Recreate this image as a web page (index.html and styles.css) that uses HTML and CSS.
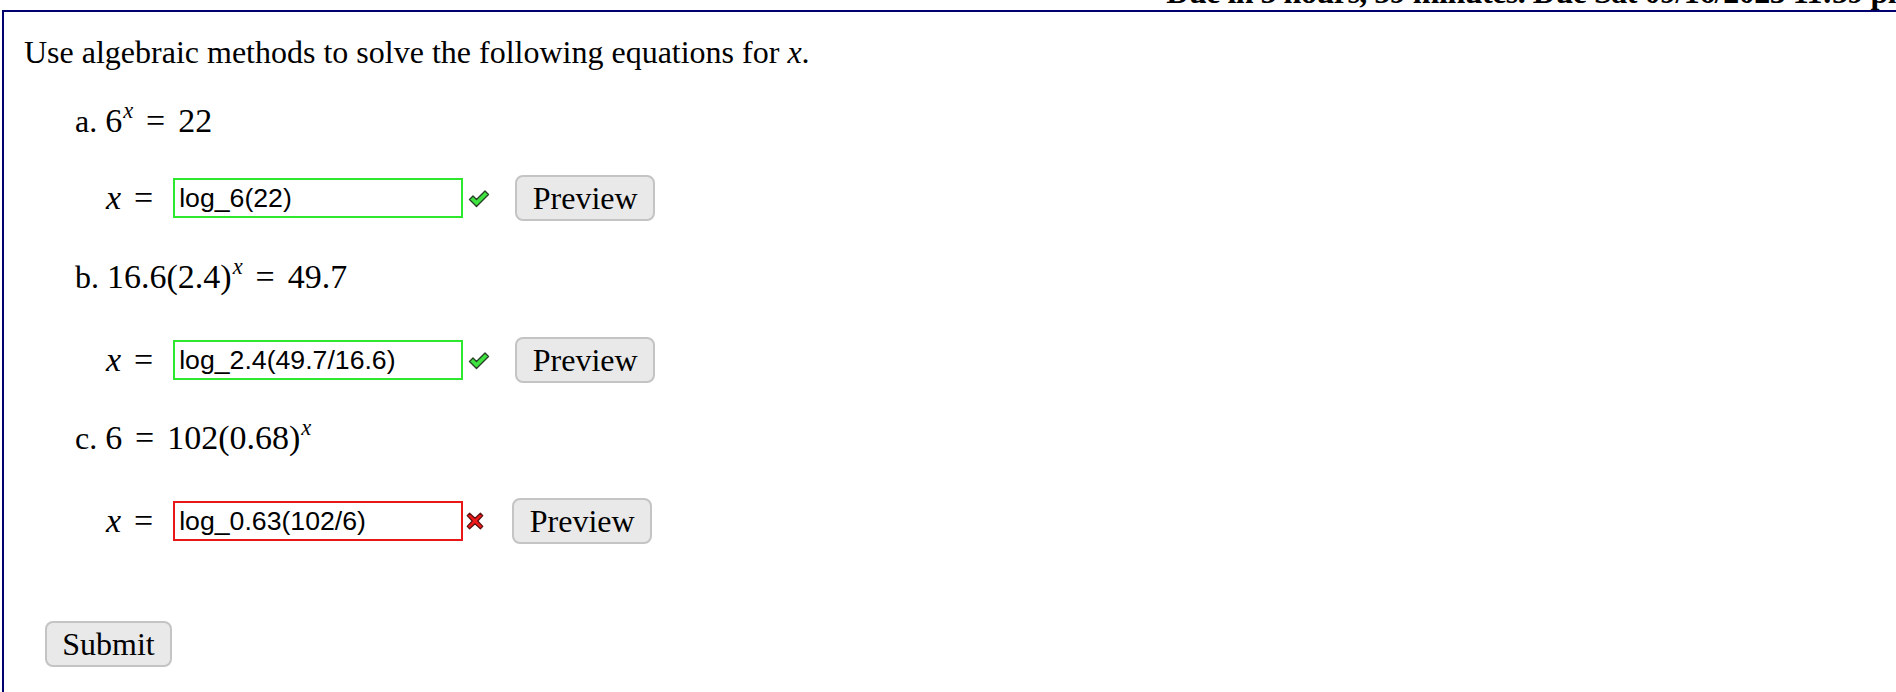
FILE: index.html
```html
<!DOCTYPE html>
<html lang="en">
<head>
<meta charset="utf-8">
<title>Problem</title>
<link rel="stylesheet" href="styles.css">
</head>
<body>
<div class="due">Due in 5 hours, 59 minutes. Due Sat 09/16/2023 11:59 pm</div>
<div class="frame">
  <p class="intro">Use algebraic methods to solve the following equations for <span class="mi">x</span>.</p>

  <div class="part">
    <div class="eq eq-a">a. <span class="math">6<span class="sup mi">x</span><span class="rel">=</span>22</span></div>
    <div class="answer answer-a">
      <span class="math"><span class="mi">x</span><span class="rel">=</span></span>
      <input class="ans correct" type="text" value="log_6(22)">
      <svg class="mark check" width="22" height="19" viewBox="0 0 22 19"><path d="M1.5 10.5 L5 7 L8.5 10.5 L17 2 L20.5 5.5 L8.5 17.5 Z" fill="#3fe33f" stroke="#264026" stroke-width="1.4" stroke-linejoin="round"/></svg>
      <button class="btn preview" type="button">Preview</button>
    </div>
  </div>

  <div class="part">
    <div class="eq eq-b">b. <span class="math">16.6(2.4)<span class="sup mi">x</span><span class="rel">=</span>49.7</span></div>
    <div class="answer answer-b">
      <span class="math"><span class="mi">x</span><span class="rel">=</span></span>
      <input class="ans correct" type="text" value="log_2.4(49.7/16.6)">
      <svg class="mark check" width="22" height="19" viewBox="0 0 22 19"><path d="M1.5 10.5 L5 7 L8.5 10.5 L17 2 L20.5 5.5 L8.5 17.5 Z" fill="#3fe33f" stroke="#264026" stroke-width="1.4" stroke-linejoin="round"/></svg>
      <button class="btn preview" type="button">Preview</button>
    </div>
  </div>

  <div class="part">
    <div class="eq eq-c">c. <span class="math">6<span class="rel">=</span>102(0.68)<span class="sup mi">x</span></span></div>
    <div class="answer answer-c">
      <span class="math"><span class="mi">x</span><span class="rel">=</span></span>
      <input class="ans incorrect" type="text" value="log_0.63(102/6)">
      <svg class="mark cross" width="18" height="18" viewBox="0 0 15 15"><path d="M3 1 L7.5 5.2 L12 1 L14 3 L9.8 7.5 L14 12 L12 14 L7.5 9.8 L3 14 L1 12 L5.2 7.5 L1 3 Z" fill="#f01818" stroke="#5a1010" stroke-width="1" stroke-linejoin="round"/></svg>
      <button class="btn preview" type="button">Preview</button>
    </div>
  </div>

  <button class="btn submit" type="button">Submit</button>
</div>
</body>
</html>
```

FILE: styles.css
```css
html, body {
  margin: 0;
  padding: 0;
  overflow: hidden;
  background: #ffffff;
}

body {
  font-family: "Liberation Serif", "Times New Roman", serif;
  font-size: 32px;
  color: #000;
}

.due {
  margin: -26px -18px 0 0;
  height: 36px;
  line-height: 36px;
  text-align: right;
  font-weight: bold;
  letter-spacing: -0.5px;
  white-space: nowrap;
}

.frame {
  margin: 0 -40px 0 2px;
  border: 2px solid #00006e;
  padding: 22px 20px 60px;
  min-height: 800px;
}

.intro {
  margin: 0;
  line-height: 36px;
}

.mi {
  font-style: italic;
}

.math {
  font-family: "Liberation Serif", "Times New Roman", serif;
  font-size: 34px;
  line-height: 1;
}

.sup {
  font-size: 0.66em;
  line-height: 0;
  vertical-align: 0.62em;
  margin-left: 1px;
}

.rel {
  margin: 0 0.38em;
}

.part {
  margin-left: 51px;
}

.eq {
  height: 40px;
  line-height: 40px;
}

.eq-a {
  margin-top: 31px;
}

.eq-b {
  margin-top: 36px;
}

.eq-c {
  margin-top: 35px;
}

.answer {
  display: flex;
  align-items: center;
  height: 46px;
  margin-top: 40px;
  padding-left: 31px;
}

.answer-a {
  margin-top: 34px;
}

.answer .rel {
  margin-right: 0;
}

.ans {
  box-sizing: border-box;
  width: 290px;
  height: 40px;
  margin: 0 0 0 20px;
  padding: 0 4px;
  font-family: "Liberation Sans", Arial, sans-serif;
  font-size: 26.67px;
  color: #000;
  background: #fff;
  border: 2px solid;
  outline: none;
}

.ans.correct {
  border-color: #2ee82e;
}

.ans.incorrect {
  border-color: #e81818;
}

.mark {
  flex: none;
}

.check {
  margin-left: 5px;
}

.cross {
  margin-left: 3px;
}

.btn {
  box-sizing: border-box;
  height: 46px;
  font-family: "Liberation Serif", "Times New Roman", serif;
  font-size: 32px;
  color: #000;
  background: #e9e9e9;
  border: 2px solid #c4c4c4;
  border-radius: 8px;
  padding: 0;
}

.preview {
  width: 140px;
  margin-left: 25px;
}

.cross + .preview {
  margin-left: 28px;
}

.submit {
  display: block;
  width: 127px;
  margin: 77px 0 0 21px;
}
```
